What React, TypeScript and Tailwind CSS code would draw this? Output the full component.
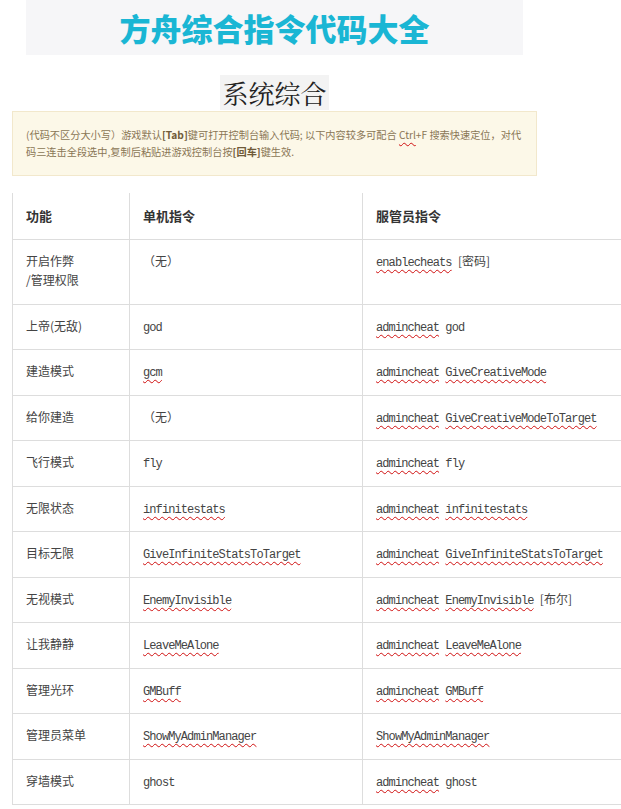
import React from "react";

type Row = { name: React.ReactNode; local: React.ReactNode; server: React.ReactNode; tall?: boolean };

// code text, spell-checked words get the red squiggle
function C({ children, bad }: { children: React.ReactNode; bad?: boolean }) {
  return (
    <span
      className={`font-['Liberation_Mono','Noto_Sans_CJK_SC',monospace] text-[12px] tracking-[-0.9px] whitespace-pre ${
        bad ? "underline decoration-wavy decoration-[#d01010] decoration-1 underline-offset-[3px]" : ""
      }`}
    >
      {children}
    </span>
  );
}

const SP = <C> </C>;

const ROWS: Row[] = [
  {
    name: (
      <>
        开启作弊
        <br />
        /管理权限
      </>
    ),
    local: "（无）",
    server: (
      <>
        <C bad>enablecheats</C>
        {SP}[密码]
      </>
    ),
    tall: true,
  },
  {
    name: "上帝(无敌)",
    local: <C>god</C>,
    server: (
      <>
        <C bad>admincheat</C>
        {SP}
        <C>god</C>
      </>
    ),
  },
  {
    name: "建造模式",
    local: <C bad>gcm</C>,
    server: (
      <>
        <C bad>admincheat</C>
        {SP}
        <C bad>GiveCreativeMode</C>
      </>
    ),
  },
  {
    name: "给你建造",
    local: "（无）",
    server: (
      <>
        <C bad>admincheat</C>
        {SP}
        <C bad>GiveCreativeModeToTarget</C>
      </>
    ),
  },
  {
    name: "飞行模式",
    local: <C>fly</C>,
    server: (
      <>
        <C bad>admincheat</C>
        {SP}
        <C>fly</C>
      </>
    ),
  },
  {
    name: "无限状态",
    local: <C bad>infinitestats</C>,
    server: (
      <>
        <C bad>admincheat</C>
        {SP}
        <C bad>infinitestats</C>
      </>
    ),
  },
  {
    name: "目标无限",
    local: <C bad>GiveInfiniteStatsToTarget</C>,
    server: (
      <>
        <C bad>admincheat</C>
        {SP}
        <C bad>GiveInfiniteStatsToTarget</C>
      </>
    ),
  },
  {
    name: "无视模式",
    local: <C bad>EnemyInvisible</C>,
    server: (
      <>
        <C bad>admincheat</C>
        {SP}
        <C bad>EnemyInvisible</C>
        {SP}[布尔]
      </>
    ),
  },
  {
    name: "让我静静",
    local: <C bad>LeaveMeAlone</C>,
    server: (
      <>
        <C bad>admincheat</C>
        {SP}
        <C bad>LeaveMeAlone</C>
      </>
    ),
  },
  {
    name: "管理光环",
    local: <C bad>GMBuff</C>,
    server: (
      <>
        <C bad>admincheat</C>
        {SP}
        <C bad>GMBuff</C>
      </>
    ),
  },
  {
    name: "管理员菜单",
    local: <C bad>ShowMyAdminManager</C>,
    server: <C bad>ShowMyAdminManager</C>,
  },
  {
    name: "穿墙模式",
    local: <C>ghost</C>,
    server: (
      <>
        <C bad>admincheat</C>
        {SP}
        <C>ghost</C>
      </>
    ),
  },
];

export default function App() {
  return (
    <div className="w-[621px] h-[809px] overflow-hidden bg-white font-['Noto_Sans_CJK_SC',sans-serif]">
      {/* Banner */}
      <div className="ml-[26px] w-[497px]">
        <div className="h-[55px] bg-[#f6f6f8] flex items-center justify-center">
          <h1 className="text-[31px] leading-none font-black text-[#1ab6d4]">方舟综合指令代码大全</h1>
        </div>
        <div className="mt-5 flex justify-center">
          <h2 className="h-[35px] px-[2px] bg-[#f3f3f3] flex items-center text-[26px] leading-none text-[#222] font-['Noto_Serif_CJK_SC','Noto_Sans_CJK_SC',serif]">
            系统综合
          </h2>
        </div>
      </div>

      {/* Notice */}
      <div className="mt-px ml-[12px] w-[525px] h-[65px] border border-[#f2e8cc] bg-[#fcf8e8] pl-[13px] pr-2 pt-[14px] text-[10.2px] leading-[17px] text-[#8a7655] whitespace-nowrap">
        (代码不区分大小写）游戏默认<b className="text-[#6f5a38]">[Tab]</b>键可打开控制台输入代码; 以下内容较多可配合{" "}
        <span className="underline decoration-wavy decoration-[#d01010] decoration-1 underline-offset-[3px]">Ctrl</span>
        +F 搜索快速定位，对代
        <br />
        码三连击全段选中,复制后粘贴进游戏控制台按<b className="text-[#6f5a38]">[回车]</b>键生效.
      </div>

      {/* Table */}
      <div className="mt-[17px] ml-[12px] w-[640px] text-[12px] leading-[19px] text-[#444]">
        <div className="flex h-[47px] border-b border-[#dddddd] font-bold text-[13px] text-[#333]">
          <div className="w-[117px] border-l border-[#dddddd] px-[13px] pt-[13px]">功能</div>
          <div className="w-[233px] border-l border-[#dddddd] px-[13px] pt-[13px]">单机指令</div>
          <div className="flex-1 border-l border-[#dddddd] px-[13px] pt-[13px]">服管员指令</div>
        </div>
        {ROWS.map((row, i) => (
          <div
            key={i}
            className={`flex border-b border-[#dddddd] ${row.tall ? "h-[64.5px]" : "h-[45.5px]"}`}
          >
            <div className="w-[117px] border-l border-[#dddddd] px-[13px] pt-[11px]">{row.name}</div>
            <div className="w-[233px] border-l border-[#dddddd] px-[13px] pt-[11px] whitespace-nowrap">
              {row.local}
            </div>
            <div className="flex-1 border-l border-[#dddddd] px-[13px] pt-[11px] whitespace-nowrap">
              {row.server}
            </div>
          </div>
        ))}
      </div>
    </div>
  );
}
